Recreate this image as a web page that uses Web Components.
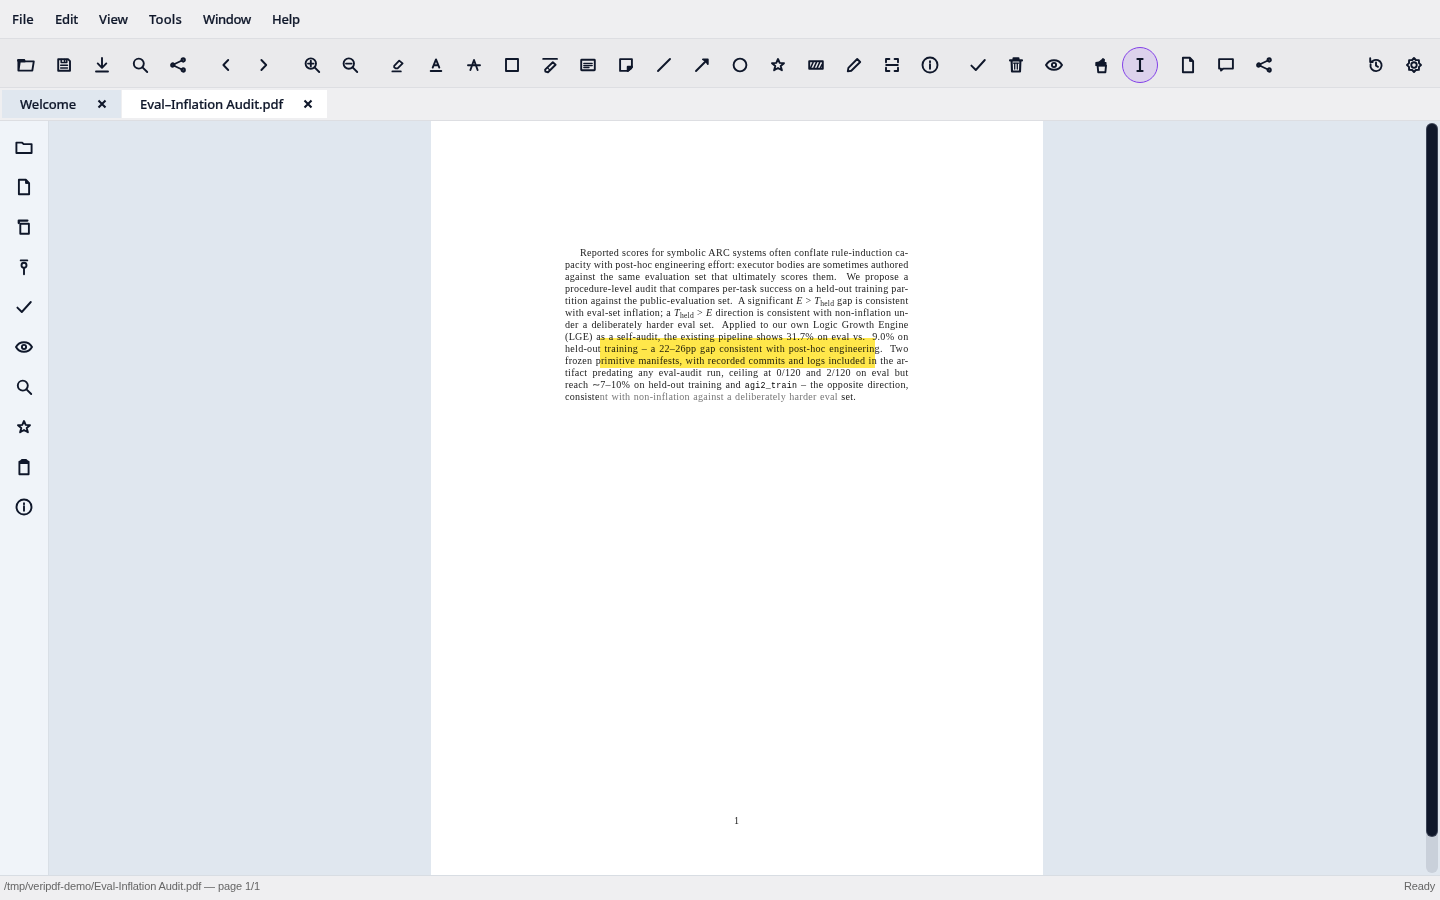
<!DOCTYPE html>
<html lang="en">
<head>
<meta charset="utf-8">
<title>Eval–Inflation Audit.pdf</title>
<style>
html,body{margin:0;height:100%;overflow:hidden}
body{font-family:"Noto Sans","Open Sans",sans-serif;color:#0f172a;background:#efeff1}
</style>
</head>
<body>
<pdf-app></pdf-app>
<script>
const ICONS={
open:'<path d="M-7.6 5.6V-5H-2.5L-1 -3.6H7.8L6.3 5.6H-7.5L-6.2 -3.4H-1"/><path d="M-7.6 -4.6H-2" stroke-width="2.6"/>',
save:'<path d="M-5.8 -5.8H4L6 -3.8V5.8H-5.8Z"/><path d="M-2.8 -5.5V-2.4H2.8V-5.5M0.6 -5.5V-3.4M-3.3 .2H3.5M-3.3 2.9H3.5" stroke-width="1.5"/>',
download:'<path d="M0 -7V2.6M-4.3 -1.6L0 2.8L4.3 -1.6M-6 6.5H6"/>',
search:'<circle cx="-1.2" cy="-1.4" r="5"/><path d="M2.5 2.3L7.2 7"/>',
share:'<path d="M5 -5L-5.5 0L5 5" /><circle cx="5.2" cy="-5" r="1.7"/><circle cx="-5.2" cy="0" r="1.7"/><circle cx="5.2" cy="5" r="1.7"/>',
prev:'<path d="M2.2 -5L-2.6 0L2.2 5"/>',
next:'<path d="M-2.6 -5L2.2 0L-2.6 5"/>',
zoomin:'<circle cx="-1.2" cy="-1.4" r="5.2"/><path d="M2.6 2.4L7.2 7M-4 -1.4H1.6M-1.2 -4.2V1.4"/>',
zoomout:'<circle cx="-1.2" cy="-1.4" r="5.2"/><path d="M2.6 2.4L7.2 7M-4 -1.4H1.6"/>',
eraser:'<path d="M-3.8 .8L1.2 -4.4L4.6 -1.6L-.4 3.4H-2.4L-3.8 2.2Z" stroke-width="1.8"/><path d="M-5.6 6.4H2.8"/>',
under:'<path d="M-3.3 2.6L0 -5.6L3.3 2.6M-2 .2H2M-5.3 6H5.3"/>',
strike:'<path d="M-3.6 5L0 -5L3.6 5M-6 .3H6"/>',
square:'<rect x="-6" y="-6" width="12" height="12"/>',
marker:'<path d="M-6.8 -6.1H7M-4.9 4.6L2.8 -2.8L5.6 -.2L-2 7.2L-4.6 6.6Z" stroke-width="1.9"/><path d="M-2.6 2.6L-.2 5" stroke-width="1.2"/>',
textbox:'<rect x="-6.8" y="-5.2" width="13.6" height="10.4" rx=".5"/><path d="M-4.2 -1.6H4.2M-4.2 .5H4.2M-4.2 2.5H1" stroke-width="1.3"/>',
note:'<path d="M-5.9 -5.9H5.9V2L1.9 5.9H-5.9Z"/><path d="M1.7 6V1.7H6L5 3.5Z" fill="currentColor"/>',
line:'<path d="M-6 6L6 -6"/>',
arrow:'<path d="M-6 6L5 -5"/><path d="M.8 -5.7H5.9V-.8L3.9 -3.8Z" fill="currentColor" stroke-width="1.6"/>',
circle:'<circle r="6.4"/>',
star:'<path d="M0 -6L1.7 -2.1L6 -1.8L2.7 1L3.9 5.3L0 3L-3.9 5.3L-2.7 1L-6 -1.8L-1.7 -2.1Z" stroke-width="1.9"/>',
redact:'<rect x="-6.8" y="-3.8" width="13.6" height="7.6"/><path d="M-5.3 2.6L-2.9 -2.6M-2 2.6L.4 -2.6M1.3 2.6L3.7 -2.6M4.5 2.6L6 -.5" stroke-width="1.5"/>',
pencil:'<path d="M-6.2 6.4L-5.6 2.8L3.2 -6L6.2 -3L-2.7 5.8Z" stroke-width="1.9"/>',
scan:'<path d="M-6 -2.8V-6H-2.6M2.6 -6H6V-2.8M6 2.8V6H2.6M-2.6 6H-6V2.8M-5.8 0H5.8"/>',
info:'<circle r="7.5"/><path d="M0 -.8V3.8M0 -3.8V-2.8"/>',
check:'<path d="M-6.6 .6L-2.2 5L6.8 -5"/>',
trash:'<path d="M-6 -4.6H6M-2.5 -5V-6.6H2.5V-5M-4.4 -4.4L-4 6.5H4L4.4 -4.4" stroke-width="2.1"/><path d="M-2.4 -1.8H2.4M-1.3 -1.5V4M1.3 -1.5V4" stroke-width="1.3"/>',
eye:'<path d="M-8 0C-4.5 -6.3 4.5 -6.3 8 0C4.5 6.3 -4.5 6.3 -8 0Z"/><circle r="2.1"/>',
hand:'<path d="M-4.4 .6L-3.8 7.2H3.4L4 .6Z"/><path d="M-6 .4V-2.2L-3 -2.8L-.6 -4.6L1 -6.2L2.2 -5.5L2 -2.4H3.8V.6H-4.4Z" fill="currentColor" stroke-width="1.4"/>',
ibeam:'<path d="M-2.6 -6H2.6M0 -6V6M-2.6 6H2.6" stroke-width="2.1"/>',
file:'<path d="M-5.1 -7.2H2L5.1 -3.8V7.2H-5.1Z"/><path d="M1.6 -7V-3.6H5L4 -5Z" fill="currentColor" stroke-width="1"/>',
chat:'<path d="M-6.9 -5.9H6.9V3.6H-2.6L-5 5.6V3.6H-6.9Z"/>',
history:'<path d="M-5.4 -.8A5.6 5.6 0 1 0 -3 -4.2L-5.5 -3M-5.8 -6.7V-2.9H-3.3M0 -2.5V.7L2 1.8" stroke-width="1.9"/>',
gear:'<path d="M0 -7L1.8 -5L4.9 -4.9L5 -1.9L7 0L5 1.9L4.9 4.9L1.8 5L0 7L-1.8 5L-4.9 4.9L-5 1.9L-7 0L-5 -1.9L-4.9 -4.9L-1.8 -5Z"/><circle r="2.7"/>',
folder:'<path d="M-7.6 6V-4.4H-2.2L-.4 -2.9H7.6V6Z"/>',
copy:'<path d="M-5.2 -4V-6.4H3.4" stroke-width="2.3"/><path d="M-3.7 -3.2H4.9V6.7H-3.7Z"/>',
pin:'<path d="M-3.3 -6.6H3.3M0 1V7.2"/><circle cy="-1.7" r="2.5"/>',
clip:'<path d="M-4.6 -5.2H4.6V7.2H-4.6Z"/><path d="M-3.6 -5.4L-2 -7H2L3.6 -5.4V-4H-3.6Z" fill="currentColor"/>',
close:'<path d="M-3.5 -3.5L3.5 3.5M3.5 -3.5L-3.5 3.5" stroke-width="2.1" stroke-linecap="butt"/>'
};
function define(name,html,setup){
  customElements.define(name,class extends HTMLElement{
    connectedCallback(){
      if(this.shadowRoot)return;
      this.attachShadow({mode:'open'}).innerHTML=typeof html==='function'?html(this):html;
      if(setup)setup(this);
    }
  });
}
define('ui-icon',e=>`<style>:host{display:block;width:24px;height:24px;flex:none}svg{display:block;overflow:visible}</style>
<svg width="24" height="24" viewBox="-12 -12 24 24" fill="none" stroke="currentColor" stroke-width="1.9" stroke-linejoin="round" stroke-linecap="round">${ICONS[e.getAttribute('name')]}</svg>`);

/* A single line of text spaced out to the width in its "w" attribute.
   With "justify", letters get a fixed tracking and the word gaps take the rest. */
define('fit-text','<style>:host{display:block;white-space:pre;flex:none}span{display:inline-block}</style><span><slot></slot></span>',e=>{
  const w=+e.getAttribute('w'),s=e.shadowRoot.querySelector('span'),t=e.textContent;
  e.style.width=w+'px';
  if(e.hasAttribute('justify')){
    s.style.letterSpacing='.27px';
    s.style.wordSpacing=((w-s.getBoundingClientRect().width)/(t.split(' ').length-1))+'px';
  }else s.style.letterSpacing=((w-s.getBoundingClientRect().width)/[...t].length)+'px';
});
define('menu-bar',`<style>:host{display:flex;box-sizing:border-box;height:39px;padding:0 12px 1px;align-items:center;background:#efeff1;border-bottom:1px solid #dddee2;font-size:13px;font-weight:500;line-height:18px;-webkit-text-stroke:.2px}
nav{display:flex;gap:21px}</style>
<nav><fit-text w="22">File</fit-text><fit-text w="23">Edit</fit-text><fit-text w="29">View</fit-text><fit-text w="33">Tools</fit-text><fit-text w="48">Window</fit-text><fit-text w="28">Help</fit-text></nav>`);

define('tool-button',e=>`<style>:host{display:flex;box-sizing:border-box;width:36px;height:36px;align-items:center;justify-content:center;border-radius:50%;flex:none}
:host([active]){background:#dcd2ec;border:1px solid #8341e8}</style><ui-icon name="${e.getAttribute('icon')}"></ui-icon>`);
const groups=['open save download search share','prev next','zoomin zoomout','eraser under strike square marker textbox note line arrow circle star redact pencil scan info','check trash eye','hand ibeam','file chat share','history gear'];
define('tool-bar',()=>`<style>:host{display:flex;box-sizing:border-box;height:49px;padding:8px 8px 4px;gap:12px;background:#eaeaec;border-bottom:1px solid #dddee2}
div{display:flex;gap:2px}div:last-child{margin-left:auto}</style>`+
groups.map(g=>'<div>'+g.split(' ').map(n=>`<tool-button icon="${n}"${n==='ibeam'?' active':''}></tool-button>`).join('')+'</div>').join(''));

define('doc-tab',`<style>:host{display:flex;box-sizing:border-box;height:28px;align-items:center;justify-content:space-between;padding:0 7px 0 18px;background:#e0e7ef;font-size:13px;font-weight:500;line-height:18px;-webkit-text-stroke:.2px}
:host([active]){background:#fff}</style><slot></slot><ui-icon name="close"></ui-icon>`);
define('tab-bar',`<style>:host{display:flex;box-sizing:border-box;height:33px;padding:2px 2px 0;gap:1px;background:#efeff1;border-bottom:1px solid #dddee2}</style>
<doc-tab style="width:119px"><fit-text w="56">Welcome</fit-text></doc-tab><doc-tab active style="width:205px"><fit-text w="143">Eval–Inflation Audit.pdf</fit-text></doc-tab>`);

define('side-bar',()=>`<style>:host{display:flex;flex-direction:column;align-items:center;gap:16px;box-sizing:border-box;width:49px;padding-top:14px;background:#f0f4f9;border-right:1px solid #d9dfe6;flex:none}</style>`+
'folder file copy pin check eye search star clip info'.split(' ').map(n=>`<ui-icon name="${n}"></ui-icon>`).join(''));

const lines=[
'Reported scores for symbolic ARC systems often conflate rule-induction ca-',
'pacity with post-hoc engineering effort: executor bodies are sometimes authored',
'against the same evaluation set that ultimately scores them.  We propose a',
'procedure-level audit that compares per-task success on a held-out training par-',
'tition against the public-evaluation set.  A significant <i>E</i> &gt; <i>T</i><sub>held</sub> gap is consistent',
'with eval-set inflation; a <i>T</i><sub>held</sub> &gt; <i>E</i> direction is consistent with non-inflation un-',
'der a deliberately harder eval set.  Applied to our own Logic Growth Engine',
'(LGE) as a self-audit, the existing pipeline shows 31.7% on eval vs.  9.0% on',
'held-out training – a 22–26pp gap consistent with post-hoc engineering.  Two',
'frozen primitive manifests, with recorded commits and logs included in the ar-',
'tifact predating any eval-audit run, ceiling at 0/120 and 2/120 on eval but',
'reach ∼7–10% on held-out training and <code>agi2_train</code> – the opposite direction,',
'consiste<span class="dim">nt with non-inflation against a deliberately harder eval</span> set.'];
define('pdf-page',()=>`<style>:host{display:flex;flex-direction:column;position:relative;box-sizing:border-box;width:612px;height:754px;padding:126px 134px 0;background:#fff;color:#222;font-family:"Liberation Serif",serif;font-size:10.1px;flex:none}
fit-text{height:12px;line-height:12px}
.first{margin-left:15px}
sub{font-size:7.6px;line-height:0;vertical-align:-2px}
code{font-family:"Liberation Mono",monospace;font-size:8.3px;color:#000}
.dim{color:#777}
mark{position:absolute;left:169px;top:217px;width:275px;height:30px;background:#ffe74a;mix-blend-mode:multiply}
footer{margin-top:411px;width:343px;text-align:center;line-height:13px}</style>`+
lines.map((l,i)=>`<fit-text justify ${i?'':'class="first"'} w="${i===0?328.5:i===12?291:343.5}">${l}</fit-text>`).join('')+'<mark></mark><footer>1</footer>');

define('scroll-bar',`<style>:host{display:block;box-sizing:border-box;width:12px;height:750px;margin:2px 2px 0 0;padding-top:1px;border-radius:6px;background:#c9d0da;flex:none}
div{height:712px;width:10px;margin:0 auto;border-radius:5px;background:#0f172a;box-shadow:0 0 0 1px #3a4254}</style><div></div>`);
define('doc-view',`<style>:host{display:flex;flex:1;background:#e0e7ef;padding-left:382px;justify-content:space-between;overflow:hidden}</style><pdf-page></pdf-page><scroll-bar></scroll-bar>`);
define('status-bar',`<style>:host{display:flex;box-sizing:border-box;height:25px;border-top:1px solid #d8dde3;padding:0 5px 4px 4px;align-items:center;justify-content:space-between;background:#efeff1;color:#666;font:11px/14px "Liberation Sans",sans-serif}</style><fit-text w="256">/tmp/veripdf-demo/Eval-Inflation Audit.pdf — page 1/1</fit-text><fit-text w="31">Ready</fit-text>`);
define('pdf-app',`<style>:host{display:flex;flex-direction:column;width:1440px;height:900px}main{display:flex;height:754px}</style>
<menu-bar></menu-bar><tool-bar></tool-bar><tab-bar></tab-bar><main><side-bar></side-bar><doc-view></doc-view></main><status-bar></status-bar>`);
</script>
</body>
</html>
